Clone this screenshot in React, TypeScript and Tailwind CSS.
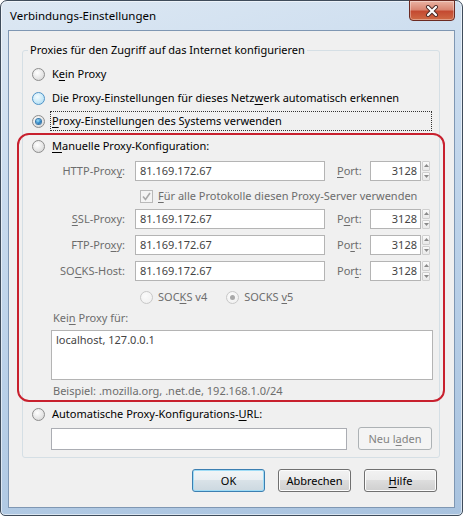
import React from "react";

const U = ({ children }: { children: React.ReactNode }) => (
  <span className="underline decoration-1 underline-offset-[2px]">{children}</span>
);

type RS = "off" | "on" | "hover" | "dis" | "disOn";

function Radio({ s }: { s: RS }) {
  const outer =
    s === "hover"
      ? "border-[#4f93c7] bg-[radial-gradient(circle_at_40%_35%,#f3fbfe_0%,#c9e9f8_55%,#a6d6ef_100%)]"
      : s === "dis" || s === "disOn"
      ? "border-[#c8c8c8] bg-[radial-gradient(circle_at_40%_35%,#fbfbfb_0%,#eeeeee_100%)]"
      : "border-[#8d8d8d] bg-[radial-gradient(circle_at_40%_35%,#ffffff_0%,#e6e6e6_55%,#cfcfcf_100%)]";
  return (
    <span
      className={
        "relative flex h-[13px] w-[13px] shrink-0 items-center justify-center rounded-full border " + outer
      }
    >
      {s === "on" && (
        <span className="h-[5px] w-[5px] rounded-full bg-[radial-gradient(circle_at_40%_35%,#a6e6fc_0%,#2c86c8_55%,#0f4f8e_100%)] shadow-[0_0_0_1px_#3a78a8]" />
      )}
      {s === "disOn" && <span className="h-[5px] w-[5px] rounded-full bg-[#a9a9a9]" />}
    </span>
  );
}

function Spinner() {
  return (
    <div className="ml-[1px] flex h-[20px] w-[8px] flex-col gap-[1px]">
      <div className="flex flex-1 items-center justify-center rounded-[1px] border border-[#cfcfcf] bg-[linear-gradient(180deg,#fafafa,#e9e9e9)]">
        <svg width="5" height="3" viewBox="0 0 5 3">
          <path d="M0 3 L2.5 0 L5 3 Z" fill="#8a8a8a" />
        </svg>
      </div>
      <div className="flex flex-1 items-center justify-center rounded-[1px] border border-[#cfcfcf] bg-[linear-gradient(180deg,#fafafa,#e9e9e9)]">
        <svg width="5" height="3" viewBox="0 0 5 3">
          <path d="M0 0 L2.5 3 L5 0 Z" fill="#8a8a8a" />
        </svg>
      </div>
    </div>
  );
}

function ProxyRow({ label, port }: { label: React.ReactNode; port: React.ReactNode }) {
  return (
    <div className="flex h-[20px] items-center">
      <div className="w-[106px] text-right text-[#6d6d6d]">{label}</div>
      <div className="ml-[10px] flex h-[20px] w-[190px] items-center border border-[#b4b4b4] bg-white pl-[4px] text-[#444444]">
        81.169.172.67
      </div>
      <div className="ml-[12px] w-[33px] text-[#6d6d6d]">{port}</div>
      <div className="flex h-[20px] w-[51px] items-center justify-end border border-[#b4b4b4] bg-white pr-[3px] text-[#444444]">
        3128
      </div>
      <Spinner />
    </div>
  );
}

function WinButton({
  children,
  isDefault,
  className = "",
}: {
  children: React.ReactNode;
  isDefault?: boolean;
  className?: string;
}) {
  return (
    <div
      className={
        "flex h-[23px] w-[73px] items-center justify-center rounded-[3px] border text-black " +
        (isDefault
          ? "border-[#3c7fb1] bg-[linear-gradient(180deg,#f2f5f7_0%,#e9eef2_50%,#d9e2e8_50%,#ccd8e0_100%)] shadow-[inset_0_0_0_1px_#9fdcf6]"
          : "border-[#707070] bg-[linear-gradient(180deg,#f2f2f2_0%,#ebebeb_50%,#dddddd_50%,#cfcfcf_100%)] shadow-[inset_0_0_0_1px_#fcfcfc]") +
        " " +
        className
      }
    >
      {children}
    </div>
  );
}

export default function App() {
  return (
    <div className="h-[516px] w-[463px] font-['Noto_Sans',sans-serif] text-[11px] leading-[16px] text-black">
      <div className="flex h-full flex-col rounded-t-[7px] rounded-b-[5px] border border-[#3f4c5b] bg-[linear-gradient(165deg,#dde8f3_0%,#c9dbee_30%,#b9d0e8_60%,#a9c3df_100%)] shadow-[inset_0_0_0_1px_rgba(255,255,255,0.55)]">
        <div className="flex h-[29px] shrink-0 items-start">
          <span className="pl-[9px] pt-[7px] text-[11.5px] text-black">Verbindungs-Einstellungen</span>
          <div className="ml-auto mr-[7px] flex h-[21px] w-[46px] -translate-y-[1px] items-center justify-center rounded-b-[4px] border border-[#6b2a22] bg-[linear-gradient(180deg,#eab3a3_0%,#d98672_45%,#c44a31_55%,#cf6a45_100%)] shadow-[inset_0_0_0_1px_rgba(255,255,255,0.35)]">
            <svg width="14" height="12" viewBox="0 0 14 12">
              <path d="M3 2 L11 10 M11 2 L3 10" stroke="#4a2a26" strokeWidth="4" strokeLinecap="round" />
              <path d="M3 2 L11 10 M11 2 L3 10" stroke="#ffffff" strokeWidth="2.2" strokeLinecap="round" />
            </svg>
          </div>
        </div>
        <div className="mx-[7px] mb-[7px] flex flex-1 flex-col border border-[#7f97b3] bg-[#f0f0f0]">
          <fieldset className="ml-[13px] mr-[14px] mt-[11px] rounded-[3px] border border-[#d5dfe5] px-0 pb-[7px] pt-[4px]">
            <legend className="ml-[5px] px-[2px] leading-[16px]">
              Proxies für den Zugriff auf das Internet konfigurieren
            </legend>

            <div className="flex h-[24px] items-center pl-[9px]">
              <Radio s="off" />
              <span className="ml-[5px] border border-transparent px-[1px]">
                K<U>e</U>in Proxy
              </span>
            </div>
            <div className="flex h-[24px] items-center pl-[9px]">
              <Radio s="hover" />
              <span className="ml-[5px] border border-transparent px-[1px]">
                Die Proxy-Einstellungen für dieses Netz<U>w</U>erk automatisch erkennen
              </span>
            </div>
            <div className="flex h-[22px] items-center pl-[9px] pr-[7px]">
              <Radio s="on" />
              <span className="ml-[5px] flex h-[20px] flex-1 items-center border border-dotted border-[#333] px-[1px]">
                <span>
                  <U>P</U>roxy-Einstellungen des Systems verwenden
                </span>
              </span>
            </div>

            <div className="-mx-[6px] mt-[1px] rounded-[12px] border-2 border-[#c8202e] pb-[1px]">
              <div className="flex h-[22px] items-center pl-[13px]">
                <Radio s="off" />
                <span className="ml-[5px] border border-transparent px-[1px]">
                  <U>M</U>anuelle Proxy-Konfiguration:
                </span>
              </div>

              <div className="mt-[4px]">
                <ProxyRow
                  label={
                    <>
                      HTTP-Prox<U>y</U>:
                    </>
                  }
                  port={
                    <>
                      <U>P</U>ort:
                    </>
                  }
                />
              </div>

              <div className="mt-[5px] flex h-[20px] items-center pl-[121px]">
                <span className="flex h-[13px] w-[13px] items-center justify-center border border-[#b9b9b9] bg-[#f4f4f4]">
                  <svg width="9" height="9" viewBox="0 0 9 9">
                    <path d="M1 4.5 L3.5 7.5 L8 1" fill="none" stroke="#a9a9a9" strokeWidth="1.6" />
                  </svg>
                </span>
                <span className="ml-[5px] text-[#6d6d6d]">
                  <U>F</U>ür alle Protokolle diesen Proxy-Server verwenden
                </span>
              </div>

              <div className="mt-[3px]">
                <ProxyRow
                  label={
                    <>
                      <U>S</U>SL-Proxy:
                    </>
                  }
                  port={
                    <>
                      P<U>o</U>rt:
                    </>
                  }
                />
              </div>
              <div className="mt-[6px]">
                <ProxyRow
                  label={
                    <>
                      FTP-Pro<U>x</U>y:
                    </>
                  }
                  port={
                    <>
                      Po<U>r</U>t:
                    </>
                  }
                />
              </div>
              <div className="mt-[6px]">
                <ProxyRow
                  label={
                    <>
                      SO<U>C</U>KS-Host:
                    </>
                  }
                  port={
                    <>
                      Por<U>t</U>:
                    </>
                  }
                />
              </div>

              <div className="mt-[6px] flex h-[20px] items-center pl-[121px] text-[#6d6d6d]">
                <Radio s="dis" />
                <span className="ml-[5px]">
                  SOC<U>K</U>S v4
                </span>
                <span className="ml-[19px]">
                  <Radio s="disOn" />
                </span>
                <span className="ml-[5px]">
                  SOCKS <U>v</U>5
                </span>
              </div>

              <div className="mt-[3px] pl-[34px] text-[#6d6d6d]">
                Kei<U>n</U> Proxy für:
              </div>
              <div className="ml-[32px] mt-[4px] h-[50px] w-[382px] border border-[#b4b4b4] bg-white px-[4px] py-[1px] text-[#444444]">
                localhost, 127.0.0.1
              </div>
              <div className="mt-[3px] pl-[34px] text-[#6d6d6d]">
                Beispiel: .mozilla.org, .net.de, 192.168.1.0/24
              </div>
            </div>

            <div className="mt-[2px] flex h-[20px] items-center pl-[9px]">
              <Radio s="off" />
              <span className="ml-[5px] border border-transparent px-[1px]">
                Automatische Proxy-Konfigurations-<U>U</U>RL:
              </span>
            </div>
            <div className="mt-[3px] flex items-center pl-[28px]">
              <div className="h-[22px] w-[296px] border border-[#abadb3] bg-white" />
              <div className="ml-[11px] flex h-[23px] w-[74px] items-center justify-center rounded-[3px] border border-[#adb2b5] bg-[#f4f4f4] text-[#838383]">
                Neu l<U>a</U>den
              </div>
            </div>
          </fieldset>

          <div className="mt-[11px] flex justify-end gap-[13px] pr-[17px]">
            <WinButton isDefault>OK</WinButton>
            <WinButton>Abbrechen</WinButton>
            <WinButton>
              <U>H</U>ilfe
            </WinButton>
          </div>
        </div>
      </div>
    </div>
  );
}
